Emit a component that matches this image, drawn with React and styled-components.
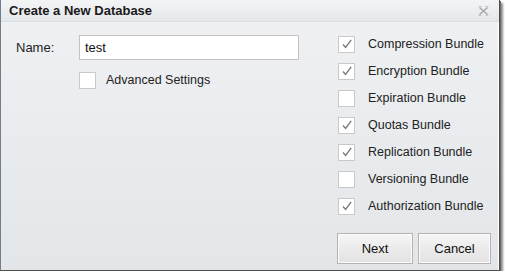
import React, { useState } from 'react';
import styled, { createGlobalStyle } from 'styled-components';

const GlobalStyle = createGlobalStyle`
  html, body {
    margin: 0;
    padding: 0;
    background: #ffffff;
  }
  body {
    font-family: "Liberation Sans", Arial, sans-serif;
  }
`;

const bundles = [
  { name: 'Compression Bundle', checked: true },
  { name: 'Encryption Bundle', checked: true },
  { name: 'Expiration Bundle', checked: false },
  { name: 'Quotas Bundle', checked: true },
  { name: 'Replication Bundle', checked: true },
  { name: 'Versioning Bundle', checked: false },
  { name: 'Authorization Bundle', checked: true },
];

function CheckBox({ checked, onClick }) {
  return (
    <Box onClick={onClick}>
      {checked && (
        <svg width="12" height="12" viewBox="0 0 12 12">
          <path
            d="M2 6.5 L4.6 9.4 L10.2 1.8"
            fill="none"
            stroke="#7a7a7a"
            strokeWidth="1.4"
          />
        </svg>
      )}
    </Box>
  );
}

function CloseIcon() {
  return (
    <svg width="11" height="10" viewBox="0 0 11 10">
      <path d="M1.5 1.5 L9.5 8.5 M9.5 1.5 L1.5 8.5" stroke="#a3a6a9" strokeWidth="1.4" fill="none" />
      <path d="M0.5 0.5 h3 M7.5 0.5 h3 M0.5 9.5 h3 M7.5 9.5 h3" stroke="#c3c6c9" strokeWidth="1" fill="none" />
    </svg>
  );
}

function App() {
  const [name, setName] = useState('test');
  const [advanced, setAdvanced] = useState(false);
  const [checks, setChecks] = useState(bundles.map(b => b.checked));

  const toggle = i => {
    setChecks(checks.map((c, j) => (j === i ? !c : c)));
  };

  return (
    <>
      <GlobalStyle />
      <Dialog>
        <TitleBar>
          <Title>Create a New Database</Title>
          <CloseButton>
            <CloseIcon />
          </CloseButton>
        </TitleBar>
        <Body>
          <Content>
            <LeftColumn>
              <FieldRow>
                <Label>Name:</Label>
                <Input value={name} onChange={e => setName(e.target.value)} />
              </FieldRow>
              <OptionRow indent>
                <CheckBox checked={advanced} onClick={() => setAdvanced(!advanced)} />
                <OptionText gap={10}>Advanced Settings</OptionText>
              </OptionRow>
            </LeftColumn>
            <RightColumn>
              {bundles.map((b, i) => (
                <OptionRow key={b.name}>
                  <CheckBox checked={checks[i]} onClick={() => toggle(i)} />
                  <OptionText gap={13}>{b.name}</OptionText>
                </OptionRow>
              ))}
            </RightColumn>
          </Content>
          <Footer>
            <Button width={76}>Next</Button>
            <Button width={73}>Cancel</Button>
          </Footer>
        </Body>
      </Dialog>
    </>
  );
}

const Dialog = styled.div`
  width: 498px;
  height: 270px;
  display: flex;
  flex-direction: column;
  border-left: 1px solid #6f7e8c;
  border-right: 1px solid #4e4e4e;
  border-bottom: 1px solid #4e4e4e;
  box-shadow: 1px 1px 0 #6a6a6a, 3px 3px 2px rgba(0, 0, 0, 0.45);
  background: linear-gradient(to bottom, #eff1f3 0%, #e3e6e9 100%);
  overflow: hidden;
`;

const TitleBar = styled.div`
  height: 21px;
  flex-shrink: 0;
  display: flex;
  align-items: center;
  justify-content: space-between;
  padding: 0 10px 0 8px;
  background: linear-gradient(to bottom, #f3f4f6 0%, #e4e7ea 100%);
  border-bottom: 1px solid #d9dde1;
`;

const Title = styled.div`
  font-family: "Liberation Sans", Tahoma, sans-serif;
  font-weight: bold;
  font-size: 13px;
  color: #1a1a1a;
`;

const CloseButton = styled.div`
  display: flex;
  align-items: center;
  margin-top: 1px;
`;

const Body = styled.div`
  flex: 1;
  display: flex;
  flex-direction: column;
  padding: 13px 7px 0 15px;
  border-right: 1px solid #ffffff;
`;

const Content = styled.div`
  display: flex;
  justify-content: space-between;
`;

const LeftColumn = styled.div`
  display: flex;
  flex-direction: column;
  gap: 11px;
`;

const FieldRow = styled.div`
  display: flex;
  align-items: center;
  height: 25px;
`;

const Label = styled.div`
  width: 63px;
  font-size: 13px;
  color: #222;
`;

const Input = styled.input`
  box-sizing: border-box;
  width: 220px;
  height: 25px;
  border: 1px solid #c4c0c4;
  background: #ffffff;
  padding: 0 5px;
  font-family: "Liberation Sans", Arial, sans-serif;
  font-size: 13px;
  color: #111;
  outline: none;
`;

const RightColumn = styled.div`
  width: 153px;
  display: flex;
  flex-direction: column;
  gap: 9px;
`;

const OptionRow = styled.div`
  display: flex;
  align-items: center;
  height: 18px;
  margin-left: ${props => (props.indent ? '63px' : '0')};
`;

const Box = styled.div`
  box-sizing: border-box;
  width: 17px;
  height: 17px;
  flex-shrink: 0;
  border: 1px solid #c9c9c9;
  background: #ffffff;
  display: flex;
  align-items: center;
  justify-content: center;
  cursor: pointer;
`;

const OptionText = styled.span`
  margin-left: ${props => props.gap}px;
  font-size: 12.5px;
  color: #222;
  white-space: nowrap;
`;

const Footer = styled.div`
  display: flex;
  justify-content: flex-end;
  gap: 5px;
  margin-top: 18px;
`;

const Button = styled.button`
  box-sizing: border-box;
  width: ${props => props.width}px;
  height: 31px;
  border: 1px solid #b5b1b5;
  box-shadow: inset 0 0 0 1px #fbfbfb;
  background: linear-gradient(to bottom, #f6f6f6 0%, #ebebeb 50%, #e2e2e2 100%);
  font-family: "Liberation Sans", Arial, sans-serif;
  font-size: 13px;
  color: #111;
  cursor: pointer;
`;

export default App;
